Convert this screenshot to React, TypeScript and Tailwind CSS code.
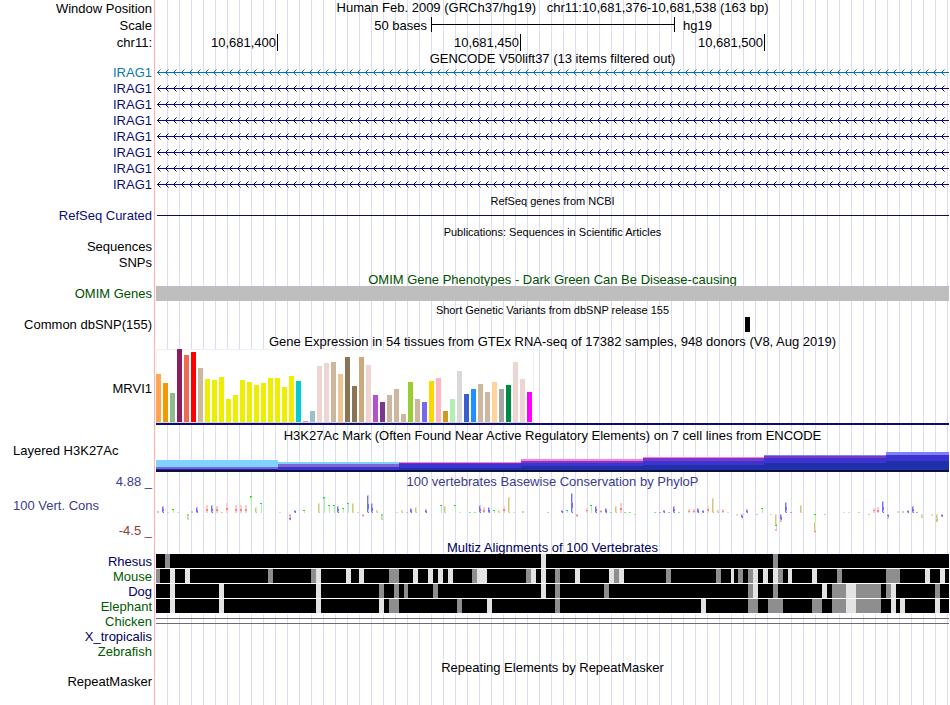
import type { ReactNode } from 'react';
import clsx from 'clsx';

// Width of the track image in pixels and number of bases shown in it
const TRACK_WIDTH = 793;
const BASES = 163;

const GENE_ROWS = [
  { name: 'IRAG1', text: 'text-[#0c78b4]', line: '#0072b2' },
  { name: 'IRAG1', text: 'text-[#0c0c78]', line: '#0c0c78' },
  { name: 'IRAG1', text: 'text-[#0c0c78]', line: '#0c0c78' },
  { name: 'IRAG1', text: 'text-[#0c0c78]', line: '#0c0c78' },
  { name: 'IRAG1', text: 'text-[#0c0c78]', line: '#0c0c78' },
  { name: 'IRAG1', text: 'text-[#0c0c78]', line: '#0c0c78' },
  { name: 'IRAG1', text: 'text-[#0c0c78]', line: '#0c0c78' },
  { name: 'IRAG1', text: 'text-[#0c0c78]', line: '#0c0c78' },
];

// [height, colour], one entry per GTEx tissue
const TISSUES: [number, string][] = [
  [48, '#ffa54f'], [39, '#ee9a00'], [29, '#8fbc8f'], [73, '#8b1c62'], [67, '#ee6a50'], [70, '#ff0000'],
  [54, '#cdb79e'], [43, '#eeee00'], [42, '#eeee00'], [45, '#eeee00'], [23, '#eeee00'], [27, '#eeee00'],
  [42, '#eeee00'], [40, '#eeee00'], [37, '#eeee00'], [39, '#eeee00'], [44, '#eeee00'], [44, '#eeee00'],
  [35, '#eeee00'], [46, '#eeee00'], [41, '#00cdcd'], [1, '#ee82ee'], [11, '#9ac0cd'], [56, '#eed5d2'],
  [59, '#eed5d2'], [60, '#cdb79e'], [48, '#eec591'], [65, '#8b7355'], [36, '#8b7355'], [65, '#cdaa7d'],
  [57, '#eed5d2'], [27, '#b452cd'], [20, '#7a378b'], [27, '#cdb79e'], [33, '#cdb79e'], [8, '#cdb79e'],
  [40, '#9acd32'], [23, '#cdb79e'], [20, '#7a67ee'], [41, '#ffd700'], [44, '#ffb6c1'], [11, '#cd9b1d'],
  [23, '#b4eeb4'], [51, '#d9d9d9'], [28, '#3a5fcd'], [33, '#1e90ff'], [38, '#cdb79e'], [30, '#cdb79e'],
  [40, '#ffd39b'], [33, '#a6a6a6'], [37, '#008b45'], [60, '#eed5d2'], [43, '#eed5d2'], [30, '#ff00ff'],
];

// Layered signal: each segment has [top, colour] bands, the last one runs down to the base
const SIGNAL: { x: number; w: number; bands: [number, string][] }[] = [
  { x: 0, w: 122, bands: [[10, '#80d2ff'], [17, '#7c68d0'], [19, '#2020b0'], [20, '#101060']] },
  { x: 122, w: 121, bands: [[12, '#80d2ff'], [14, '#7c68d0'], [17, '#3c34d0'], [20, '#141460']] },
  { x: 243, w: 122, bands: [[12, '#ff80d0'], [13, '#5c38d0'], [14, '#3c34d0'], [18, '#2030a8']] },
  { x: 365, w: 122, bands: [[9, '#ff80d0'], [11, '#7c38c8'], [13, '#3c34d0'], [16, '#2030a8']] },
  { x: 487, w: 121, bands: [[7, '#ff80d0'], [8, '#7c38c8'], [11, '#3c34d0'], [15, '#2030a8']] },
  { x: 608, w: 122, bands: [[5, '#8080ff'], [6, '#7c38c8'], [8, '#3c34d0'], [13, '#2030a8']] },
  { x: 730, w: 63, bands: [[2, '#8080ff'], [5, '#3c34d0'], [11, '#2030a8']] },
];

const BASE_COLORS: Record<string, { strong: string; soft: string }> = {
  A: { strong: '#ff8080', soft: '#ffcccc' },
  C: { strong: '#d0c878', soft: '#e8e4bc' },
  G: { strong: '#7070ff', soft: '#c4c4ff' },
  T: { strong: '#20e020', soft: '#a8f4a8' },
};

// "base position, nucleotide, score height"
const CONSERVED =
  '0A2 1G7 2C1 3T4 4C1 7A2 8G6 10A8 11G8 12A7 13A1 14A10 16A8 17A8 18A8 19T17 20C6 21T10 25C1 28G3 30T3 33C10 ' +
  '34T16 35T8 36T8 37G7 38T5 39T10 40C10 41C1 43G18 44G10 45C3 49C1 50C3 51A1 52G5 53C6 55G4 58T8 59C7 61T8 ' +
  '62C1 64T1 65T1 66G8 67A6 68G6 69T3 70C3 71A7 72C16 73C1 75A2 80A1 83G3 84T3 85G20 88A5 89T8 90G7 91A3 92G5 ' +
  '93T1 94C7 95A10 96T1 97T1 102T1 103G1 104G3 105G1 106G7 107T1 109A4 110A4 111G5 112G3 113A7 114C15 115C3 ' +
  '116A4 117C1 121G4 124T5 129G11 130G1 132C8 141C1 142C1 144A1 147A5 148A6 149G12 152C2 153A2 154G3 155G7 156G1';

const DIVERGED =
  '6T2 6C4 27A3 27G3 42A3 46T2 46C4 86A3 98A1 119C2 120G4 123A1 126C1 127C11 127T4 127A2 128G6 128A2 ' +
  '135T8 135C8 135A3 137A1 146A1 150G3 150A2 157C4 159C2 160C5 160T2 160A1 161G3';

// Alignment gaps: "start:width", the prefix g is grey and l is light
const ALIGNMENTS = [
  { name: 'Rhesus', text: 'text-[#00005a]', gaps: 'g9:5 l385:5 g617:5' },
  {
    name: 'Mouse',
    text: 'text-[#005a00]',
    gaps:
      'g0:4 l14:5 l29:5 g112:5 g155:5 l160:5 l190:5 l203:5 g233:10 l257:5 l272:5 l282:5 l292:5 g316:5 l321:10 ' +
      'g370:5 l375:5 l385:5 g399:5 l419:5 l453:5 g458:5 l463:5 g510:5 g560:5 l575:3 g582:5 g592:5 l597:5 l607:5 ' +
      'l617:5 g622:5 l632:4 l656:5 g681:5 g730:14 l769:5 l784:5',
  },
  {
    name: 'Dog',
    text: 'text-[#00005a]',
    gaps:
      'l14:5 l63:5 l160:5 g223:5 g238:5 g248:4 g277:5 l385:5 g399:5 g448:5 g592:5 l597:5 g617:5 l666:5 g676:14 ' +
      'l690:10 g700:25 g730:5 l735:5 g779:5',
  },
  {
    name: 'Elephant',
    text: 'text-[#005a00]',
    gaps:
      'l14:5 l63:5 l160:5 l223:5 g233:10 g301:5 l331:5 g399:5 l545:5 g592:10 g612:15 g656:10 g676:14 l690:10 ' +
      'g700:25 l735:5 l744:5 l779:5',
  },
];

type TrackRowProps = {
  label?: ReactNode;
  labelClass?: string;
  height: string;
  children?: ReactNode;
};

function TrackRow({ label, labelClass, height, children }: TrackRowProps) {
  return (
    <div className={clsx('flex', height)}>
      <div className={clsx('w-[154px] shrink-0 whitespace-pre pr-0.5 text-right', labelClass ?? 'leading-4')}>
        {label}
      </div>
      <div className="min-w-0 flex-1 border-l border-[#ffb0b0] pl-px">
        <div className="h-full bg-[repeating-linear-gradient(to_right,transparent_0_11px,#dcdcfa_11px_12px)]">
          {children}
        </div>
      </div>
    </div>
  );
}

function Title({ children, className }: { children: ReactNode; className: string }) {
  return <h2 className={clsx('whitespace-pre text-center', className)}>{children}</h2>;
}

function IntronLine({ id, color }: { id: string; color: string }) {
  return (
    <svg className="block h-4 w-full" shapeRendering="crispEdges" aria-hidden="true">
      <defs>
        <pattern id={id} x="1" y="0" width="8" height="16" patternUnits="userSpaceOnUse">
          <rect x="0" y="7" width="8" height="1" fill={color} />
          <rect x="1" y="6" width="1" height="1" fill={color} />
          <rect x="1" y="8" width="1" height="1" fill={color} />
          <rect x="2" y="5" width="1" height="1" fill={color} />
          <rect x="2" y="9" width="1" height="1" fill={color} />
          <rect x="3" y="4" width="1" height="1" fill={color} opacity="0.5" />
          <rect x="3" y="10" width="1" height="1" fill={color} opacity="0.5" />
        </pattern>
      </defs>
      <rect x="1" width="100%" height="16" fill={`url(#${id})`} />
    </svg>
  );
}

function ExpressionChart() {
  return (
    <svg className="block h-[74px] w-[378px]" shapeRendering="crispEdges" role="img" aria-label="GTEx expression">
      <rect x="0" y="0" width="378" height="74" fill="#f0f0f0" />
      <rect x="1" y="1" width="376" height="72" fill="#ffffff" />
      <rect x="0" y="73" width="378" height="1" fill="#d8d8d0" />
      {TISSUES.map(([h, color], i) => (
        <rect key={i} x={i * 7} y={73 - h} width="5" height={h} fill={color} />
      ))}
    </svg>
  );
}

function SignalChart() {
  return (
    <svg
      className="block h-[22px] w-full"
      viewBox={`0 0 ${TRACK_WIDTH} 22`}
      preserveAspectRatio="none"
      shapeRendering="crispEdges"
      aria-hidden="true"
    >
      {SIGNAL.map(({ x, w, bands }) =>
        bands.map(([top, color]) => <rect key={`${x}-${top}`} x={x} y={top} width={w} height={22 - top} fill={color} />)
      )}
      <rect x="0" y="20" width={TRACK_WIDTH} height="2" fill="#101040" />
    </svg>
  );
}

function parseScores(list: string) {
  return list.split(' ').map((item) => {
    const [, pos, base, h] = item.match(/^(\d+)([ACGT])(\d+)$/)!;
    return { pos: Number(pos), base, h: Number(h) };
  });
}

function ScoreMark({ x, y, h, base }: { x: number; y: number; h: number; base: string }) {
  const { strong, soft } = BASE_COLORS[base];
  if (h < 3) {
    return <rect x={x} y={y} width="2" height={h} fill={strong} opacity="0.6" />;
  }
  if (base === 'T') {
    return (
      <g>
        <rect x={x} y={y} width="2" height={h > 12 ? 2 : 1} fill={strong} />
        <rect x={x + 1} y={y + 1} width="1" height={h - 1} fill={soft} />
      </g>
    );
  }
  if (base === 'A') {
    return (
      <g>
        <rect x={x} y={y} width="2" height={h} fill={soft} />
        <rect x={x} y={y + Math.floor(h / 2)} width="2" height={h > 5 ? 2 : 1} fill={strong} />
      </g>
    );
  }
  return (
    <g>
      <rect x={x} y={y} width="2" height={h} fill={soft} />
      <rect x={x} y={y + 1} width="1" height={h - 2} fill={strong} />
      <rect x={x + 1} y={y + h - 1} width="1" height="1" fill={strong} />
      {base === 'G' && <rect x={x + 1} y={y + Math.floor(h / 2)} width="1" height={Math.ceil(h / 4)} fill={strong} />}
    </g>
  );
}

function ConservationChart() {
  const baseX = (pos: number) => Math.round(((pos + 0.5) * TRACK_WIDTH) / BASES) - 1;
  const depth: Record<number, number> = {};

  return (
    <svg
      className="block h-[51px] w-full"
      viewBox={`0 0 ${TRACK_WIDTH} 51`}
      preserveAspectRatio="none"
      shapeRendering="crispEdges"
      aria-hidden="true"
    >
      {parseScores(CONSERVED).map(({ pos, base, h }) => (
        <ScoreMark key={pos} x={baseX(pos)} y={24 - h} h={h} base={base} />
      ))}
      {parseScores(DIVERGED).map(({ pos, base, h }) => {
        const y = 25 + (depth[pos] ?? 0);
        depth[pos] = (depth[pos] ?? 0) + h;
        return <ScoreMark key={`${pos}${base}`} x={baseX(pos)} y={y} h={h} base={base} />;
      })}
    </svg>
  );
}

function AlignmentStrip({ gaps }: { gaps: string }) {
  return (
    <svg
      className="block h-[15px] w-full"
      viewBox={`0 0 ${TRACK_WIDTH} 15`}
      preserveAspectRatio="none"
      shapeRendering="crispEdges"
      aria-hidden="true"
    >
      <rect width={TRACK_WIDTH} height="15" fill="#ffffff" />
      <rect width={TRACK_WIDTH} height="14" fill="#000000" />
      {gaps.split(' ').map((gap) => {
        const [x, w] = gap.slice(1).split(':');
        return <rect key={gap} x={x} width={w} height="14" fill={gap[0] === 'g' ? '#8e8e8e' : '#e3e3e3'} />;
      })}
    </svg>
  );
}

export default function App() {
  return (
    <main className="flex min-h-screen flex-col bg-white pr-px font-['Liberation_Sans',Arial,sans-serif] text-[13px] text-black">
      <TrackRow label="Window Position" labelClass="leading-[17px]" height="h-[17px]">
        <h1 className="whitespace-pre text-center leading-[15px]">
          {'Human Feb. 2009 (GRCh37/hg19)   chr11:10,681,376-10,681,538 (163 bp)'}
        </h1>
      </TrackRow>
      <TrackRow label="Scale" labelClass="leading-[17px]" height="h-[17px]">
        <div className="grid h-full grid-cols-[275fr_244fr_274fr] leading-[17px]">
          <span className="pr-1 text-right">50 bases</span>
          <span className="flex h-[15px] items-center border-x border-black">
            <span className="h-px w-full bg-black" />
          </span>
          <span className="pl-2">hg19</span>
        </div>
      </TrackRow>
      <TrackRow label="chr11:" labelClass="leading-[17px]" height="h-[17px]">
        <div className="grid h-[15px] grid-cols-[122fr_243fr_244fr_184fr] text-right leading-[17px]">
          <span className="border-r border-black pr-px">10,681,400</span>
          <span className="border-r border-black pr-px">10,681,450</span>
          <span className="border-r border-black pr-px">10,681,500</span>
        </div>
      </TrackRow>

      <TrackRow height="h-3.5">
        <Title className="leading-[15px]">GENCODE V50lift37 (13 items filtered out)</Title>
      </TrackRow>
      {GENE_ROWS.map(({ name, text, line }, i) => (
        <TrackRow key={i} label={name} labelClass={clsx('leading-4', text)} height="h-4">
          <IntronLine id={`intron-${i}`} color={line} />
        </TrackRow>
      ))}

      <TrackRow height="h-[15px]">
        <Title className="text-[11px] leading-[17px]">RefSeq genes from NCBI</Title>
      </TrackRow>
      <TrackRow label="RefSeq Curated" labelClass="leading-4 text-[#0c0c78]" height="h-4">
        <div className="pl-px pt-[7px]">
          <div className="h-px bg-[#0c0c50]" />
        </div>
      </TrackRow>

      <TrackRow height="h-[15px]">
        <Title className="text-[11px] leading-[17px]">Publications: Sequences in Scientific Articles</Title>
      </TrackRow>
      <TrackRow label="Sequences" height="h-4" />
      <TrackRow label="SNPs" height="h-4" />

      <TrackRow height="h-[15px]">
        <Title className="leading-[17px] text-[#005000]">OMIM Gene Phenotypes - Dark Green Can Be Disease-causing</Title>
      </TrackRow>
      <TrackRow label="OMIM Genes" labelClass="leading-4 text-[#005000]" height="h-4">
        <div className="h-[15px] bg-[#bebebe]" />
      </TrackRow>

      <TrackRow height="h-[15px]">
        <Title className="text-[11px] leading-[17px]">Short Genetic Variants from dbSNP release 155</Title>
      </TrackRow>
      <TrackRow label="Common dbSNP(155)" height="h-4">
        <svg
          className="block h-[15px] w-full"
          viewBox={`0 0 ${TRACK_WIDTH} 15`}
          preserveAspectRatio="none"
          shapeRendering="crispEdges"
          aria-hidden="true"
        >
          <rect x="589" width="5" height="15" fill="#000000" />
        </svg>
      </TrackRow>

      <TrackRow height="h-4">
        <Title className="leading-[17px]">
          Gene Expression in 54 tissues from GTEx RNA-seq of 17382 samples, 948 donors (V8, Aug 2019)
        </Title>
      </TrackRow>
      <TrackRow label="MRVI1" labelClass="self-center leading-4" height="h-[79px]">
        <ExpressionChart />
        <div className="h-0.5 bg-[#0c0c78]" />
      </TrackRow>

      <TrackRow height="h-[15px]">
        <Title className="leading-[15px]">
          H3K27Ac Mark (Often Found Near Active Regulatory Elements) on 7 cell lines from ENCODE
        </Title>
      </TrackRow>
      <TrackRow label="Layered H3K27Ac" labelClass="pl-[13px] text-left! leading-[15px]" height="h-[31px]">
        <div className="pt-[7px]">
          <SignalChart />
        </div>
      </TrackRow>

      <TrackRow label="4.88 _" labelClass="leading-[15px] text-[#3c3c8c]" height="h-[15px]">
        <Title className="leading-[15px] text-[#3c3c8c]">100 vertebrates Basewise Conservation by PhyloP</Title>
      </TrackRow>
      <TrackRow
        label={
          <div className="flex flex-col gap-2.5 pt-[9px]">
            <span className="pl-[13px] text-left text-[#3c3c8c]">100 Vert. Cons</span>
            <span className="text-[#8c3c3c]">-4.5 _</span>
          </div>
        }
        labelClass="leading-[15px]"
        height="h-[51px]"
      >
        <ConservationChart />
      </TrackRow>

      <TrackRow height="h-3.5">
        <Title className="leading-[15px] text-[#00005a]">Multiz Alignments of 100 Vertebrates</Title>
      </TrackRow>
      {ALIGNMENTS.map(({ name, text, gaps }) => (
        <TrackRow key={name} label={name} labelClass={clsx('leading-4', text)} height="h-[15px]">
          <AlignmentStrip gaps={gaps} />
        </TrackRow>
      ))}
      <TrackRow label="Chicken" labelClass="leading-4 text-[#005a00]" height="h-[15px]">
        <div className="pt-1">
          <div className="h-1.5 border-y border-[#6e6e6e]" />
        </div>
      </TrackRow>
      <TrackRow label="X_tropicalis" labelClass="leading-4 text-[#00005a]" height="h-[15px]" />
      <TrackRow label="Zebrafish" labelClass="leading-4 text-[#005a00]" height="h-[15px]" />

      <TrackRow height="h-[15px]">
        <Title className="leading-[17px]">Repeating Elements by RepeatMasker</Title>
      </TrackRow>
      <TrackRow label="RepeatMasker" height="flex-1" />
    </main>
  );
}
